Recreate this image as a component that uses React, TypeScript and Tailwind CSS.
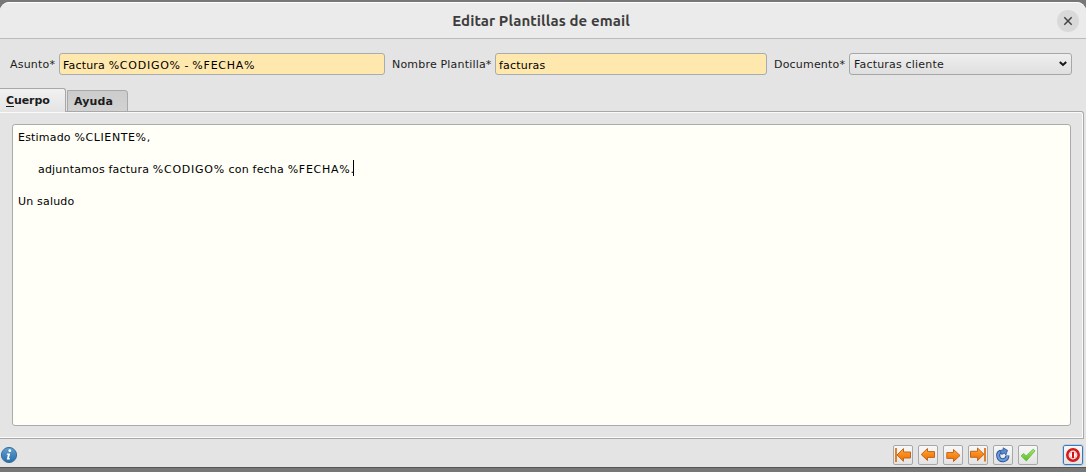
import React from 'react';

type Kind = 'first' | 'prev' | 'next' | 'last' | 'refresh' | 'accept' | 'cancel';

function ToolIcon({ kind }: { kind: Kind }) {
  const arrow = { fill: 'url(#orange)', stroke: '#c0641a', strokeWidth: 1, strokeLinejoin: 'round' as const };
  return (
    <svg width="18" height="18" viewBox="0 0 18 18" className="block">
      <defs>
        <linearGradient id="orange" x1="0" y1="0" x2="0" y2="1">
          <stop offset="0" stopColor="#ffae45" />
          <stop offset="0.5" stopColor="#fa8718" />
          <stop offset="1" stopColor="#e96f05" />
        </linearGradient>
        <linearGradient id="green" x1="0" y1="0" x2="0" y2="1">
          <stop offset="0" stopColor="#a5ec64" />
          <stop offset="1" stopColor="#55bd27" />
        </linearGradient>
      </defs>
      {kind === 'first' && (
        <>
          <path d="M2 2V16" stroke="#dc7414" strokeWidth="1.8" />
          <path d="M3 9L9.5 2.6V6H16.5V12H9.5V15.3Z" {...arrow} />
        </>
      )}
      {kind === 'prev' && <path d="M2.2 8.5L8.5 2.5V5.6H15.5V11.4H8.5V14.5Z" {...arrow} />}
      {kind === 'next' && <path d="M16 9.5L9.5 3.5V6.6H2.8V12.4H9.5V15.5Z" {...arrow} />}
      {kind === 'last' && (
        <>
          <path d="M16 2V15.5" stroke="#dc7414" strokeWidth="1.8" />
          <path d="M15 8.3L8.5 2V5.3H1.5V11.3H8.5V14.7Z" {...arrow} />
        </>
      )}
      {kind === 'refresh' && (
        <>
          <path d="M13.4 9.6A4.6 4.6 0 1 1 6.6 5.6" fill="none" stroke="#2d5595" strokeWidth="4" />
          <path d="M13.4 9.6A4.6 4.6 0 1 1 6.6 5.6" fill="none" stroke="#6c9bdd" strokeWidth="2.1" />
          <path d="M6 4.6L9.6 3.6L9 1.8L13.5 4.3L11.8 9L10.6 7.2L7.6 8.4Z" fill="#5b8bd0" stroke="#2d5595" strokeWidth="0.8" />
        </>
      )}
      {kind === 'accept' && (
        <path d="M2 9.8L4.8 7.6L7.1 10L14.2 3.2L16 4.9L7.3 15Z" fill="url(#green)" stroke="#6db94a" strokeWidth="0.9" strokeLinejoin="round" />
      )}
      {kind === 'cancel' && (
        <>
          <circle cx="9" cy="9" r="5.7" fill="#fff" stroke="#d51a1a" strokeWidth="2.6" />
          <circle cx="9" cy="9" r="3.4" fill="#fff" stroke="#e98a86" strokeWidth="0.7" />
          <path d="M9 6V12" stroke="#cf1212" strokeWidth="2" />
        </>
      )}
    </svg>
  );
}

function ToolButton({ kind, label }: { kind: Kind; label: string }) {
  return (
    <button
      aria-label={label}
      className={
        'flex h-[20px] w-[20px] shrink-0 items-center justify-center rounded-[2px] border bg-linear-to-b from-[#f8f8f8] to-[#e3e3e3] ' +
        (kind === 'cancel' ? 'border-[#3d79b4] outline outline-[#bdd0e2]' : 'border-[#a6a8aa]')
      }
    >
      <ToolIcon kind={kind} />
    </button>
  );
}

function Token({ children }: { children: string }) {
  return <span className="tracking-[0.75px]">{children}</span>;
}

export default function App() {
  return (
    <div className="flex h-[472px] w-[1086px] flex-col overflow-hidden bg-[#777777] pt-[2px] font-['DejaVu_Sans',sans-serif] text-[11px] tracking-[0.19px] text-[#1c1c1c]">
      <div className="flex h-[466px] flex-col rounded-t-[9px] border-b border-[#555555] bg-[#e4e4e4]">
        <header className="flex h-[37px] shrink-0 items-center rounded-t-[9px] border-t border-b border-t-white border-b-[#bbbbbb] bg-[#ebebeb] pr-[7px] pl-[25px]">
          <h1 className="flex-1 text-center font-[Ubuntu,'Noto_Sans',sans-serif] text-[15px] leading-[20px] font-bold text-[#3d3d3d]">
            <span className="inline-block tracking-[0.08px]">Editar Plantillas de email</span>
          </h1>
          <button aria-label="Cerrar" className="flex h-[22px] w-[22px] items-center justify-center rounded-full bg-[#d9d9d9]">
            <svg width="10" height="10" viewBox="0 0 10 10">
              <path d="M1.3 1.3L8.7 8.7M8.7 1.3L1.3 8.7" stroke="#444" strokeWidth="1.5" />
            </svg>
          </button>
        </header>

        <div className="flex h-[49px] shrink-0 pt-[14px] leading-[24px]">
          <label className="w-[59px] shrink-0 pl-[10px] whitespace-nowrap">Asunto*</label>
          <div className="h-[22px] w-[326px] shrink-0 rounded-[3px] border border-[#a9abad] bg-[#ffe8ad] pl-[3px] leading-[23px] text-black">
            Factura <Token>%CODIGO%</Token> - <Token>%FECHA%</Token>
          </div>
          <label className="w-[110px] shrink-0 pl-[7px] whitespace-nowrap">Nombre Plantilla*</label>
          <div className="h-[22px] w-[272px] shrink-0 rounded-[3px] border border-[#a9abad] bg-[#ffe8ad] pl-[3px] leading-[23px] text-black">
            facturas
          </div>
          <label className="w-[82px] shrink-0 pl-[7px] whitespace-nowrap">Documento*</label>
          <div className="flex h-[22px] w-[223px] shrink-0 items-center justify-between rounded-[3px] border border-[#a5a7a9] bg-linear-to-b from-[#efefef] to-[#dfdfdf] pr-[4px] pl-[4px]">
            <span className="pt-[2px] leading-[20px]">Facturas cliente</span>
            <svg width="8" height="6" viewBox="0 0 8 6">
              <path d="M0.8 1L4 4L7.2 1" fill="none" stroke="#161616" strokeWidth="2" />
            </svg>
          </div>
        </div>

        <div className="z-10 -mb-[1px] flex h-[24px] shrink-0 items-end text-[11px] font-bold tracking-normal">
          <div className="h-[24px] w-[66px] rounded-tr-[3px] border-t border-r border-[#a8a8a8] bg-linear-to-b from-[#f1f1f1] to-[#e4e4e4] pl-[6px] leading-[23px] tracking-[-0.1px]">
            <span className="underline underline-offset-2">C</span>uerpo
          </div>
          <div className="ml-[1px] h-[22px] w-[61px] rounded-tr-[3px] border border-[#a8a8a8] bg-linear-to-b from-[#cccccc] to-[#d2d2d2] pl-[6px] leading-[21px] tracking-[0.1px]">
            Ayuda
          </div>
        </div>

        <main className="mr-[2px] h-[328px] shrink-0 rounded-tr-[3px] border-t border-r border-b border-[#a8a8a8] pt-[1px] shadow-[inset_-1px_1px_0_#fafafa,inset_0_-1px_0_#fafafa]">
          <div className="mt-[11px] ml-[12px] h-[302px] w-[1059px] rounded-[3px] border border-[#a9abad] bg-[#fffff7] pt-[5px] pl-[5px] leading-[16px] text-black">
            <p>Estimado <span className="tracking-[0.6px]">%CLIENTE%,</span></p>
            <p className="mt-[16px] flex pl-[20px]">
              <span>adjuntamos factura <Token>%CODIGO%</Token> con fecha <Token>%FECHA%.</Token></span>
              <span className="-mt-[2px] -ml-[2px] h-[16px] w-px bg-black" />
            </p>
            <p className="mt-[16px]">Un saludo</p>
          </div>
        </main>

        <footer className="flex flex-1 items-start pt-[6px] pr-[3px]">
          <svg width="18" height="18" viewBox="0 0 18 18" className="mt-[1px]">
            <defs>
              <linearGradient id="blue" x1="0" y1="0" x2="0" y2="1">
                <stop offset="0" stopColor="#62a0d2" />
                <stop offset="1" stopColor="#286ca9" />
              </linearGradient>
            </defs>
            <circle cx="9" cy="9" r="7.6" fill="url(#blue)" stroke="#34719f" />
            <circle cx="9.8" cy="4.7" r="1.4" fill="#fff" />
            <path d="M7 7.4H10.2L8.9 12.2H10.1L9.8 13.4H6.8L7.9 8.8H6.7Z" fill="#fff" />
          </svg>
          <div className="ml-auto flex gap-[5px]">
            <ToolButton kind="first" label="Primero" />
            <ToolButton kind="prev" label="Anterior" />
            <ToolButton kind="next" label="Siguiente" />
            <ToolButton kind="last" label="Último" />
            <ToolButton kind="refresh" label="Actualizar" />
            <ToolButton kind="accept" label="Aceptar" />
          </div>
          <div className="ml-[25px]">
            <ToolButton kind="cancel" label="Cancelar" />
          </div>
        </footer>
      </div>
    </div>
  );
}
